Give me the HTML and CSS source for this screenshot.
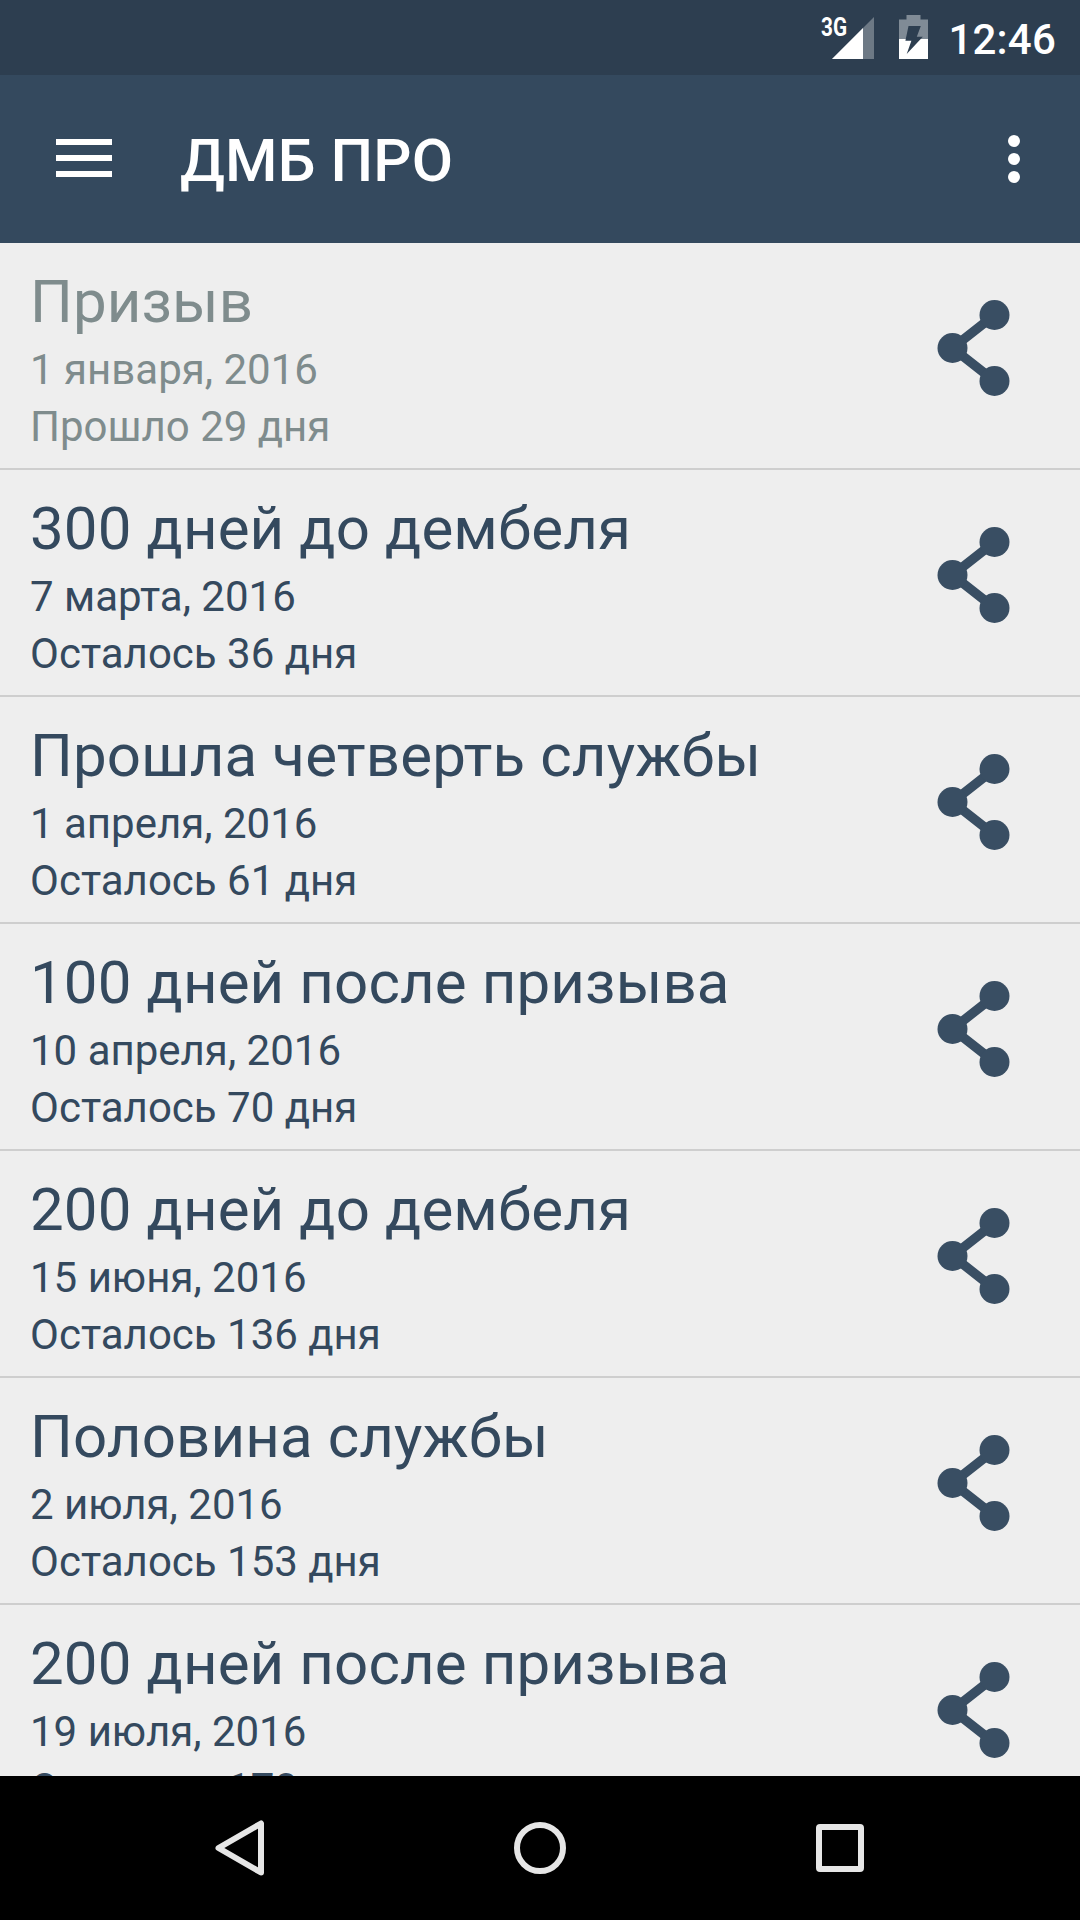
FILE: index.html
```html
<!DOCTYPE html>
<html lang="ru">
<head>
<meta charset="utf-8">
<title>ДМБ ПРО</title>
<link rel="stylesheet" href="styles.css">
</head>
<body>
<svg class="defs" width="0" height="0"><defs><symbol id="share" viewBox="-1 -1 73 98"><path d="M56.500 15L14.500 48l42 33" fill="none" stroke="currentColor" stroke-width="9.400"/><circle cx="56.500" cy="15" r="15"/><circle cx="14.500" cy="48" r="15"/><circle cx="56.500" cy="81" r="15"/></symbol></defs></svg>
<div class="screen">
<header class="status">
<span class="network">3G</span>
<svg class="signal" width="42" height="42" viewBox="0 0 42 42"><path d="M42 0v42H0z" fill="#6d7985"/><path d="M31 11v31H0z" fill="#fff"/></svg>
<svg class="battery" width="29" height="44" viewBox="0 0 29 44"><path d="M7.500 0h14v4.500H29V24H0V4.500h7.500z" fill="#808b96"/><path d="M0 24h29v20H0z" fill="#fff"/><path d="M9.500 11h12.300l-4 10.800h6L7.700 39l4.700-13.300h-6z" fill="#2d3e50"/></svg>
<time class="clock">12:46</time>
</header>
<div class="toolbar">
<svg class="menu" width="56" height="40" viewBox="0 0 56 40"><path d="M0 3h56M0 19h56M0 35h56" stroke="#fff" stroke-width="6"/></svg>
<h1 class="title">ДМБ ПРО</h1>
<svg class="more" width="12" height="48" viewBox="0 0 12 48" fill="#fff"><circle cx="6" cy="6" r="6"/><circle cx="6" cy="24" r="6"/><circle cx="6" cy="42" r="6"/></svg>
</div>
<main class="list">
<article class="row past"><div><h2>Призыв</h2><p>1 января, 2016</p><p>Прошло 29 дня</p></div><svg class="share"><use href="#share"/></svg></article>
<article class="row"><div><h2>300 дней до дембеля</h2><p>7 марта, 2016</p><p>Осталось 36 дня</p></div><svg class="share"><use href="#share"/></svg></article>
<article class="row"><div><h2>Прошла четверть службы</h2><p>1 апреля, 2016</p><p>Осталось 61 дня</p></div><svg class="share"><use href="#share"/></svg></article>
<article class="row"><div><h2>100 дней после призыва</h2><p>10 апреля, 2016</p><p>Осталось 70 дня</p></div><svg class="share"><use href="#share"/></svg></article>
<article class="row"><div><h2>200 дней до дембеля</h2><p>15 июня, 2016</p><p>Осталось 136 дня</p></div><svg class="share"><use href="#share"/></svg></article>
<article class="row"><div><h2>Половина службы</h2><p>2 июля, 2016</p><p>Осталось 153 дня</p></div><svg class="share"><use href="#share"/></svg></article>
<article class="row"><div><h2>200 дней после призыва</h2><p>19 июля, 2016</p><p>Осталось 170 дня</p></div><svg class="share"><use href="#share"/></svg></article>
</main>
<nav class="nav">
<svg width="60" height="60" viewBox="0 0 60 60"><path d="M51 5.500v49L8.500 30z"/></svg>
<svg width="60" height="60" viewBox="0 0 60 60"><circle cx="30" cy="30" r="23"/></svg>
<svg width="60" height="60" viewBox="0 0 60 60"><rect x="9" y="9" width="42" height="42" rx="1"/></svg>
</nav>
</div>
</body>
</html>
```
FILE: styles.css
```css
* { box-sizing: border-box; }
body { margin: 0; font-family: Roboto, sans-serif; color: #34495e; background: #eee; }
h1, h2, p { margin: 0; font-weight: 400; }
.defs { display: none; }
.screen { height: 1920px; width: 1080px; display: flex; flex-direction: column; overflow: hidden; }
.status { height: 75px; flex: none; background: #2d3e50; color: #fff; display: flex; align-items: flex-start; justify-content: flex-end; padding-right: 24px; position: relative; }
.signal { margin: 17px 25px 0 0; }
.network { position: absolute; left: 821px; top: 13px; font-size: 25px; line-height: 29px; font-weight: 700; transform: scaleX(.83); transform-origin: left; }
.battery { margin-top: 15px; }
.clock { width: 128px; text-align: right; padding-top: 15px; font-size: 42px; font-weight: 500; line-height: 50px; letter-spacing: .2px; white-space: nowrap; }
.toolbar { height: 168px; flex: none; background: #34495e; color: #fff; display: flex; align-items: center; padding: 0 60px 0 56px; }
.title { font-size: 60px; font-weight: 500; margin-left: 68px; padding-top: 4px; flex: 1; line-height: 70px; letter-spacing: .15px; }
.list { flex: 1; min-height: 0; overflow: hidden; }
.row { height: 227px; border-bottom: 2px solid #cecece; display: flex; justify-content: space-between; padding: 24px 70px 0 30px; }
.row h2 { font-size: 60px; line-height: 70px; letter-spacing: .13px; }
.row p { font-size: 42px; line-height: 49px; margin-top: 8px; }
.past > div { color: #7f8c8d; }
.share { width: 73px; height: 98px; margin-top: 32px; color: #394e63; fill: currentColor; }
.nav { height: 144px; flex: none; background: #000; display: flex; justify-content: center; align-items: center; gap: 240px; }
.nav svg { fill: none; stroke: #e6e6e6; stroke-width: 6; stroke-linejoin: round; }
```
